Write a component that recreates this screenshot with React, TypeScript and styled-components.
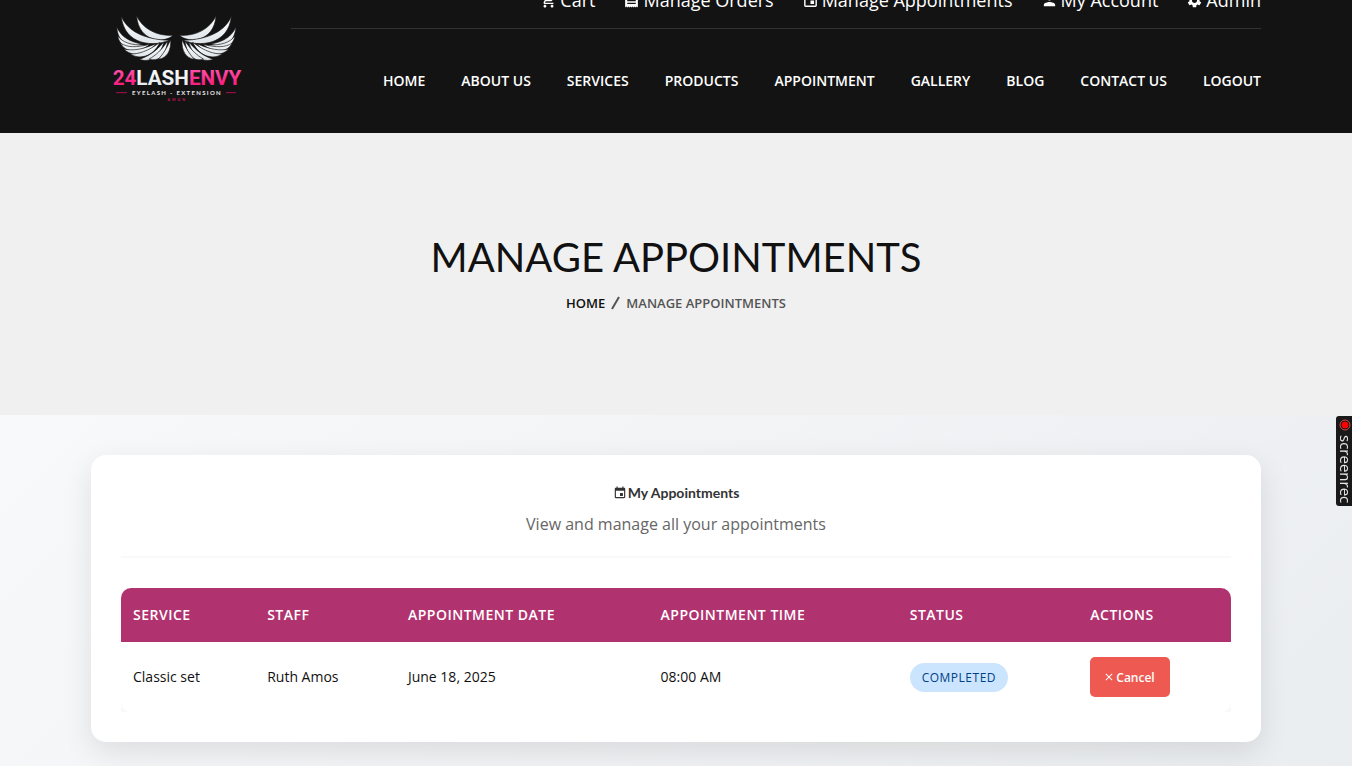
import React from "react";
import styled, { createGlobalStyle } from "styled-components";
import { MdShoppingCart, MdReceipt, MdEvent, MdPerson, MdSettings, MdClose } from "react-icons/md";

const GlobalStyle = createGlobalStyle`
  *, *::before, *::after { box-sizing: border-box; }
  body {
    margin: 0;
    background: #fff;
    color: #111;
    font-family: "Open Sans", "Noto Sans", sans-serif;
    font-size: 14px;
    line-height: 24px;
  }
  h1, h2, p, ul, ol { margin: 0; padding: 0; }
  ul, ol { list-style: none; }
  a { color: inherit; text-decoration: none; }
  svg { flex: none; }
`;

const Container = styled.div`
  width: 100%;
  max-width: 1170px;
  margin: 0 auto;
`;

const Header = styled.header`
  background: #131313;
  color: #fff;
`;

const HeaderRow = styled(Container)`
  display: flex;
  justify-content: space-between;
  gap: 48px;
  padding-left: 21px;
`;

const LogoLink = styled.a`
  display: block;
  padding-top: 15px;
  line-height: 0;
`;

const HeaderMain = styled.div`
  flex: 1;
  max-width: 970px;
  min-width: 0;
`;

const TopBar = styled.ul`
  display: flex;
  justify-content: flex-end;
  align-items: flex-end;
  gap: 28px;
  height: 29px;
  padding-bottom: 16px;
  border-bottom: 1px solid #333;
  overflow: hidden;
`;

const TopLink = styled.a`
  display: flex;
  align-items: center;
  gap: 3px;
  font-size: 18px;
  line-height: 24px;
  white-space: nowrap;
`;

const Nav = styled.nav`
  display: flex;
  justify-content: flex-end;
  align-items: center;
  gap: 36px;
  height: 104px;
`;

const NavLink = styled.a`
  font-size: 14px;
  font-weight: 600;
  text-transform: uppercase;
  white-space: nowrap;
`;

const Hero = styled.section`
  display: flex;
  flex-direction: column;
  align-items: center;
  padding: 100px 16px;
  background: #f0f0f0;
`;

const HeroTitle = styled.h1`
  font-family: Lato, sans-serif;
  font-size: 40px;
  font-weight: 400;
  line-height: 48px;
  margin-bottom: 10px;
  text-transform: uppercase;
  text-align: center;
`;

const Breadcrumb = styled.ol`
  display: flex;
  align-items: center;
  gap: 6px;
  font-size: 13px;
  font-weight: 600;
  text-transform: uppercase;
  color: #555;

  a { color: #111; }
  li { display: flex; align-items: center; gap: 6px; }
`;

const Content = styled.main`
  padding: 40px 16px 24px;
  background: linear-gradient(135deg, #f8f9fb 0%, #e9ecef 110%);
`;

const Card = styled.section`
  width: 100%;
  max-width: 1170px;
  margin: 0 auto;
  padding: 30px;
  background: #fff;
  border-radius: 15px;
  box-shadow: 0 10px 30px rgba(0, 0, 0, 0.1);
`;

const CardHeader = styled.header`
  display: flex;
  flex-direction: column;
  align-items: center;
  gap: 11px;
  padding-bottom: 20px;
  margin-bottom: 30px;
  border-bottom: 2px solid #f8f9fa;
`;

const CardTitle = styled.h2`
  display: flex;
  align-items: center;
  gap: 1px;
  font-family: Lato, sans-serif;
  font-size: 14px;
  font-weight: 700;
  line-height: 16px;
  color: #333;
`;

const CardText = styled.p`
  font-size: 16px;
  color: #666;
`;

const TableFrame = styled.div`
  background: #f8f9fa;
  border-radius: 10px 10px 0 0;
`;

const Table = styled.table`
  width: 100%;
  border-spacing: 0;
  border-radius: 10px;
  overflow: hidden;
  background: #fff;
  text-align: left;
`;

const HeadCell = styled.th`
  padding: 15px 12px;
  background: #b03370;
  color: #fff;
  font-weight: 600;
  letter-spacing: 0.5px;
  text-transform: uppercase;
`;

const Cell = styled.td`
  padding: 15px 12px;
  vertical-align: middle;
`;

const Badge = styled.span`
  display: block;
  width: fit-content;
  padding: 6px 12px;
  border-radius: 20px;
  background: #cce5ff;
  color: #004085;
  font-size: 12px;
  font-weight: 500;
  line-height: 17px;
  letter-spacing: 0.5px;
  text-transform: uppercase;
`;

const CancelButton = styled.button`
  display: flex;
  align-items: center;
  gap: 1px;
  height: 40px;
  padding: 0 15px 0 13px;
  border: 0;
  border-radius: 5px;
  background: #ee5a52;
  color: #fff;
  font: 600 12px "Open Sans", sans-serif;
  cursor: pointer;
`;

const Recorder = styled.aside`
  position: fixed;
  top: 416px;
  right: 0;
  display: flex;
  flex-direction: column;
  align-items: flex-end;
  gap: 4px;
  width: 16px;
  height: 90px;
  padding-top: 3px;
  border-radius: 3px 0 0 3px;
  background: #191919;
  color: #e6e6e6;
`;

const RecorderText = styled.span`
  writing-mode: vertical-rl;
  font-size: 15px;
  line-height: 12px;
`;

const feathers = [
  "M110 51 C128 88 168 112 219 109 C194 134 116 130 110 51 Z",
  "M64 51 C80 94 130 122 209 124 C162 144 72 140 64 51 Z",
  "M50 84 C64 114 88 128 126 135 C86 152 54 130 50 84 Z",
  "M53 111 C68 130 92 139 134 138 C96 162 60 146 53 111 Z",
  "M61 132 C82 146 108 146 150 136 C112 166 76 160 61 132 Z",
  "M71 150 C98 156 126 152 168 134 C136 172 96 174 71 150 Z",
  "M91 165 C116 165 142 158 180 130 C158 176 116 182 91 165 Z",
  "M118 181 C144 172 168 158 192 128 C180 176 146 192 118 181 Z",
  "M148 180 C168 168 184 154 203 126 C198 170 174 190 148 180 Z",
  "M175 181 C190 164 200 148 212 122 C214 156 200 178 175 181 Z",
];

function Logo() {
  return (
    <svg width="130" height="88" viewBox="36 48 390 264" role="img" aria-label="24 Lash Envy">
      <defs>
        <linearGradient id="pink" x1="0" y1="0" x2="0" y2="1">
          <stop offset="0" stopColor="#ff5cb4" />
          <stop offset="1" stopColor="#f80c70" />
        </linearGradient>
        <linearGradient id="silver" x1="0" y1="0" x2="0" y2="1">
          <stop offset="0" stopColor="#ffffff" />
          <stop offset="1" stopColor="#dfe5ea" />
        </linearGradient>
        <g id="wing">
          {feathers.map((d) => (
            <path key={d} d={d} fill="url(#silver)" stroke="#131313" strokeWidth="2" />
          ))}
        </g>
      </defs>
      <use href="#wing" />
      <use href="#wing" transform="translate(458 0) scale(-1 1)" />
      <text x="231" y="257" textAnchor="middle" fontFamily="Roboto, sans-serif" fontSize="62" fontWeight="700">
        <tspan fill="url(#pink)">24</tspan>
        <tspan fill="url(#silver)">LASH</tspan>
        <tspan fill="url(#pink)">ENVY</tspan>
      </text>
      <path d="M48 281H81M378 281H408" stroke="#a80f50" strokeWidth="3" />
      <text x="231" y="287" textAnchor="middle" fontFamily="Lato, sans-serif" fontSize="18" fontWeight="700" letterSpacing="4" fill="#e8e8e8">
        EYELASH - EXTENSION
      </text>
      <text x="232" y="306" textAnchor="middle" fontFamily="Lato, sans-serif" fontSize="11" fontWeight="700" letterSpacing="6" fill="#c9155c">
        AMUN
      </text>
    </svg>
  );
}

const topLinks = [
  { label: "Cart", Icon: MdShoppingCart },
  { label: "Manage Orders", Icon: MdReceipt },
  { label: "Manage Appointments", Icon: MdEvent },
  { label: "My Account", Icon: MdPerson },
  { label: "Admin", Icon: MdSettings },
];

const navLinks = ["Home", "About us", "Services", "Products", "Appointment", "Gallery", "Blog", "Contact us", "Logout"];

const columns = ["Service", "Staff", "Appointment Date", "Appointment Time", "Status", "Actions"];

export default function App() {
  return (
    <>
      <GlobalStyle />
      <Header>
        <HeaderRow>
          <LogoLink href="#home">
            <Logo />
          </LogoLink>
          <HeaderMain>
            <TopBar>
              {topLinks.map(({ label, Icon }) => (
                <li key={label}>
                  <TopLink href="#">
                    <Icon size={17} aria-hidden />
                    {label}
                  </TopLink>
                </li>
              ))}
            </TopBar>
            <Nav>
              {navLinks.map((label) => (
                <NavLink key={label} href="#">
                  {label}
                </NavLink>
              ))}
            </Nav>
          </HeaderMain>
        </HeaderRow>
      </Header>

      <Hero>
        <HeroTitle>Manage Appointments</HeroTitle>
        <Breadcrumb>
          <li>
            <a href="#home">Home</a>
            <svg width="9" height="14" viewBox="0 0 9 14" aria-hidden>
              <path d="M1 13 8 1" stroke="#555" strokeWidth="2" />
            </svg>
          </li>
          <li>Manage Appointments</li>
        </Breadcrumb>
      </Hero>

      <Content>
        <Card>
          <CardHeader>
            <CardTitle>
              <MdEvent size={14} aria-hidden />
              My Appointments
            </CardTitle>
            <CardText>View and manage all your appointments</CardText>
          </CardHeader>
          <TableFrame>
            <Table>
              <thead>
                <tr>
                  {columns.map((name) => (
                    <HeadCell key={name} scope="col">
                      {name}
                    </HeadCell>
                  ))}
                </tr>
              </thead>
              <tbody>
                <tr>
                  <Cell>Classic set</Cell>
                  <Cell>Ruth Amos</Cell>
                  <Cell>June 18, 2025</Cell>
                  <Cell>08:00 AM</Cell>
                  <Cell>
                    <Badge>Completed</Badge>
                  </Cell>
                  <Cell>
                    <CancelButton type="button">
                      <MdClose size={12} aria-hidden />
                      Cancel
                    </CancelButton>
                  </Cell>
                </tr>
              </tbody>
            </Table>
          </TableFrame>
        </Card>
      </Content>

      <Recorder>
        <svg width="13" height="12" viewBox="0 0 13 12" aria-hidden>
          <circle cx="6" cy="6" r="5" fill="none" stroke="#d44" strokeWidth="1" />
          <circle cx="6" cy="6" r="3" fill="#f00" stroke="#f00" strokeWidth="1" />
        </svg>
        <RecorderText>screenrec</RecorderText>
      </Recorder>
    </>
  );
}
